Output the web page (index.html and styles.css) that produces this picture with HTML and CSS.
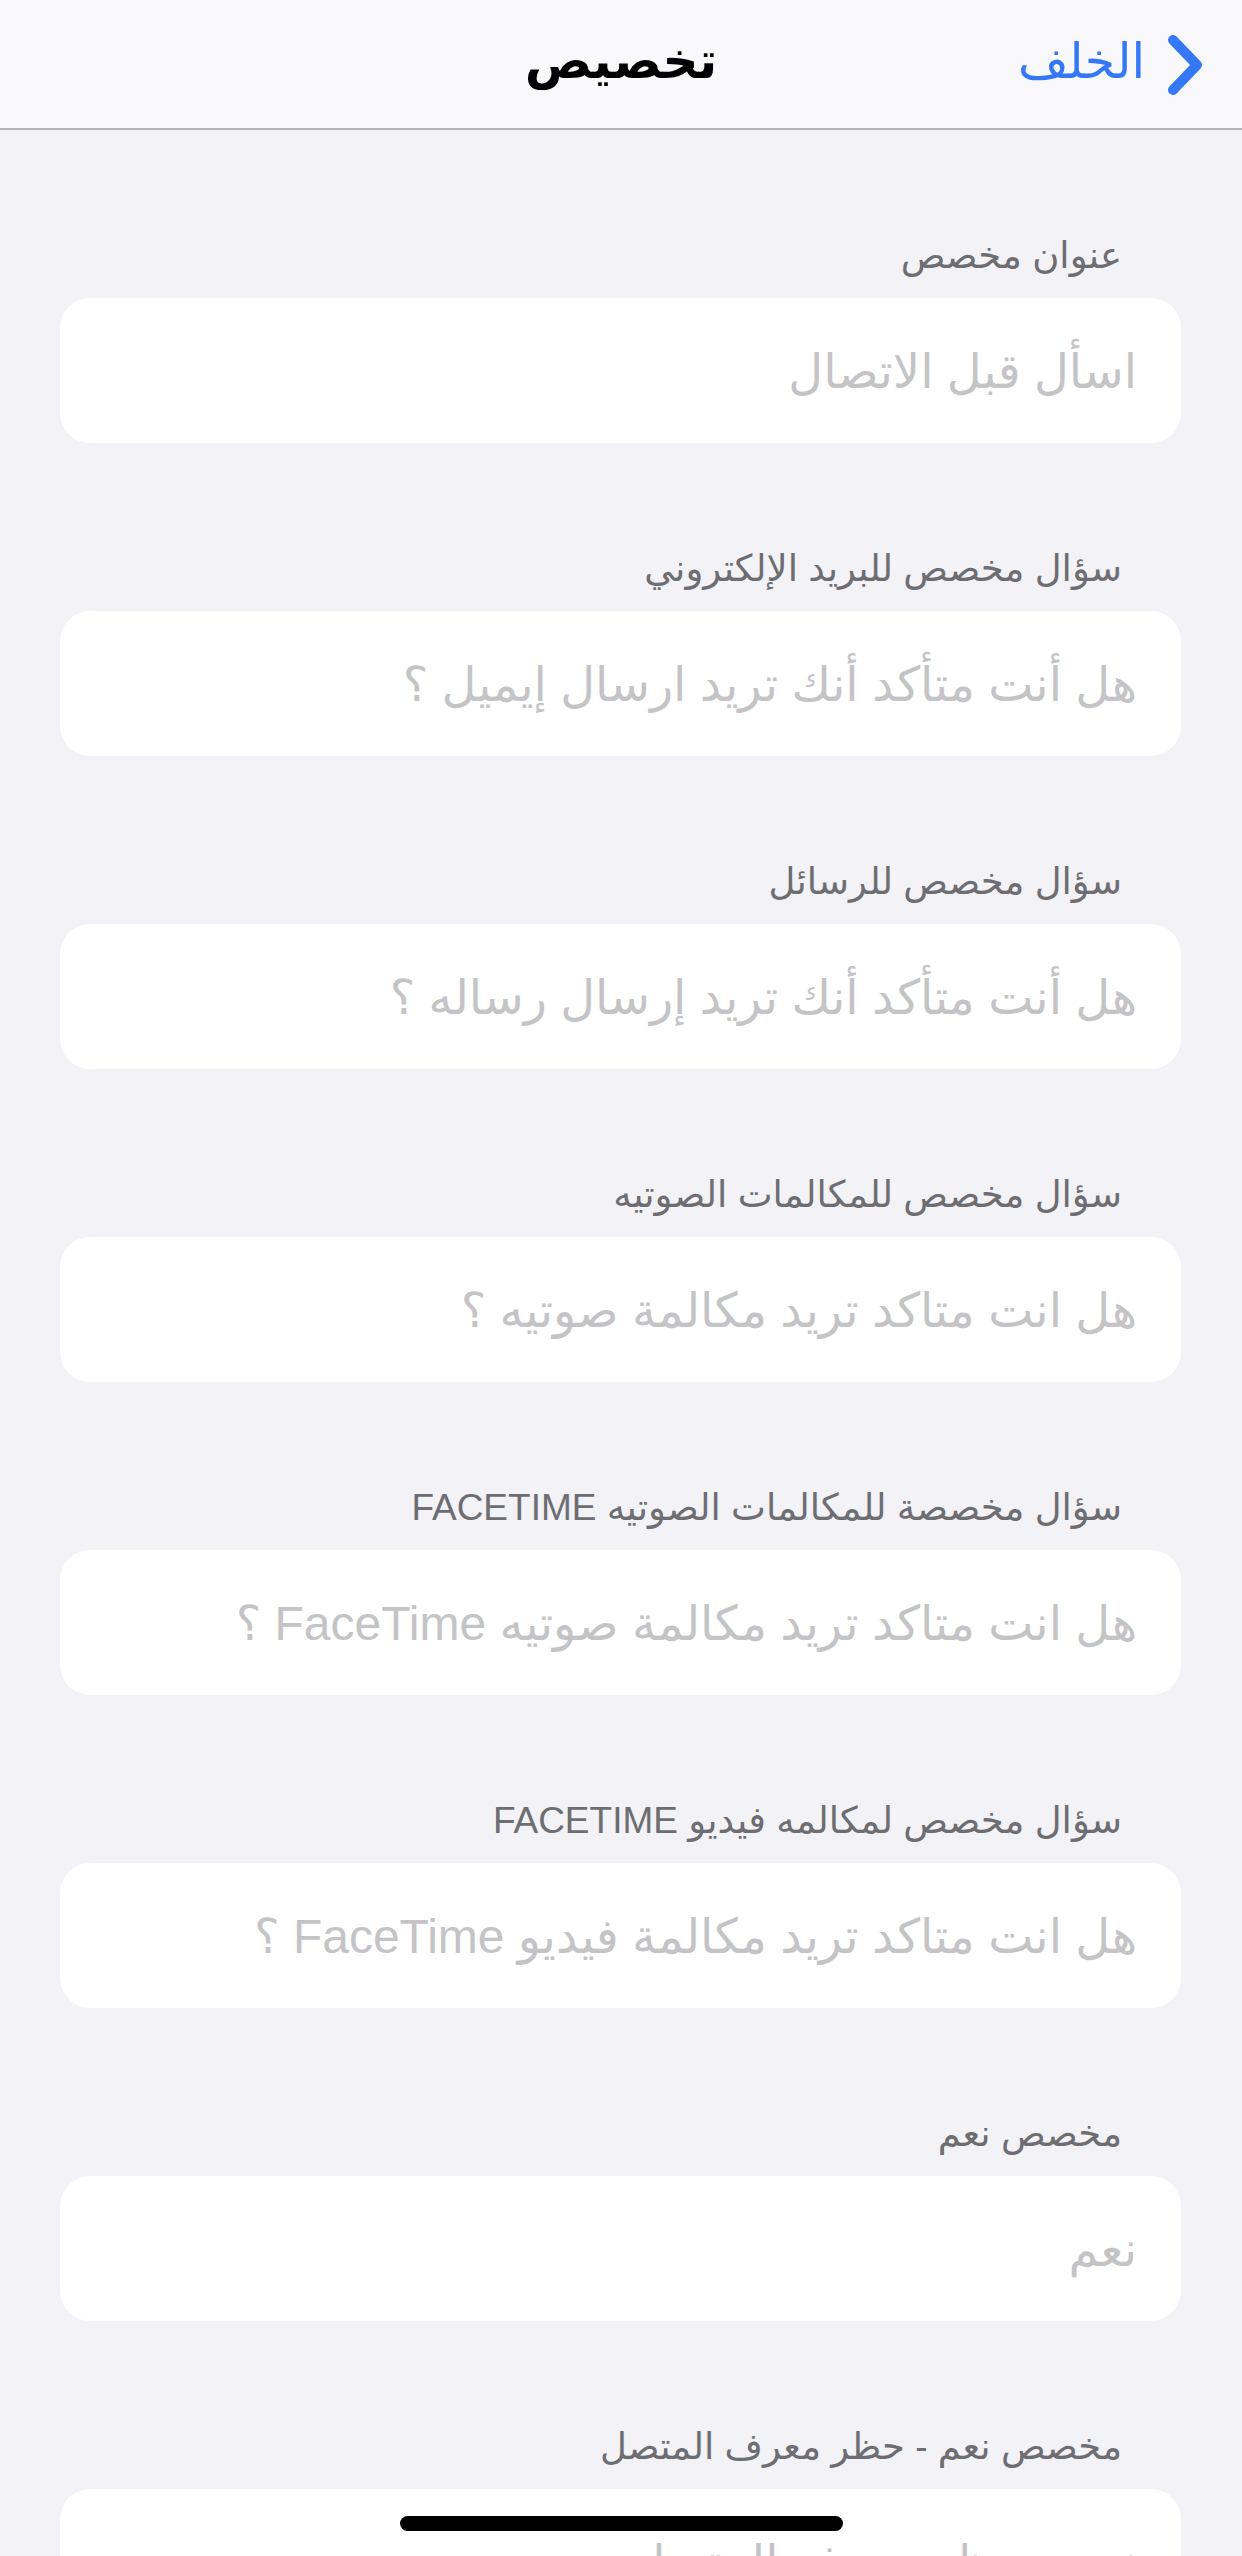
FILE: index.html
```html
<!DOCTYPE html>
<html lang="ar" dir="rtl">
<head>
<meta charset="utf-8">
<title>تخصيص</title>
<link rel="stylesheet" href="styles.css">
</head>
<body>
<div class="screen">
  <header class="navbar">
    <div class="nav-back">
      <svg class="chevron" viewBox="0 0 36 62" width="36" height="62" aria-hidden="true">
        <path d="M6 6 L30 31 L6 56" fill="none" stroke="#3478f6" stroke-width="10" stroke-linecap="round" stroke-linejoin="round"/>
      </svg>
      <span class="back-text">الخلف</span>
    </div>
    <div class="nav-title">تخصيص</div>
    <div class="nav-spacer"></div>
  </header>

  <main class="form">
    <section class="group">
      <div class="label">عنوان مخصص</div>
      <div class="field"><span class="ph">اسأل قبل الاتصال</span></div>
    </section>
    <section class="group">
      <div class="label">سؤال مخصص للبريد الإلكتروني</div>
      <div class="field"><span class="ph">هل أنت متأكد أنك تريد ارسال إيميل ؟</span></div>
    </section>
    <section class="group">
      <div class="label">سؤال مخصص للرسائل</div>
      <div class="field"><span class="ph">هل أنت متأكد أنك تريد إرسال رساله ؟</span></div>
    </section>
    <section class="group">
      <div class="label">سؤال مخصص للمكالمات الصوتيه</div>
      <div class="field"><span class="ph">هل انت متاكد تريد مكالمة صوتيه ؟</span></div>
    </section>
    <section class="group">
      <div class="label">سؤال مخصصة للمكالمات الصوتيه FACETIME</div>
      <div class="field"><span class="ph">هل انت متاكد تريد مكالمة صوتيه FaceTime ؟</span></div>
    </section>
    <section class="group">
      <div class="label">سؤال مخصص لمكالمه فيديو FACETIME</div>
      <div class="field"><span class="ph">هل انت متاكد تريد مكالمة فيديو FaceTime ؟</span></div>
    </section>
    <section class="group">
      <div class="label">مخصص نعم</div>
      <div class="field"><span class="ph">نعم</span></div>
    </section>
    <section class="group">
      <div class="label">مخصص نعم - حظر معرف المتصل</div>
      <div class="field"><span class="ph">نعم - حظر معرف المتصل</span></div>
    </section>
  </main>

  <div class="home-indicator"></div>
</div>
</body>
</html>
```

FILE: styles.css
```css
* {
  box-sizing: border-box;
}

html, body {
  margin: 0;
  padding: 0;
}

body {
  background: #f2f2f7;
  font-family: "Liberation Sans", "DejaVu Sans", sans-serif;
}

.screen {
  position: relative;
  width: 1242px;
  height: 2556px;
  overflow: hidden;
  background: #f2f2f7;
}

.navbar {
  height: 130px;
  background: #f9f9fb;
  border-bottom: 2px solid #b4b4b8;
  display: grid;
  grid-template-columns: 1fr auto 1fr;
  align-items: center;
  padding: 0 39px;
}

.nav-back {
  display: flex;
  align-items: center;
  gap: 22px;
  color: #3478f6;
  font-size: 49px;
  justify-self: start;
}

.chevron {
  display: block;
  margin-top: 2px;
}

.back-text {
  line-height: 1;
  padding-bottom: 6px;
}

.nav-title {
  font-size: 50px;
  font-weight: bold;
  color: #000;
  line-height: 1;
  padding-bottom: 6px;
}

.form {
  padding: 100px 61px 0 60px;
}

.group {
  margin-bottom: 100px;
}

.label {
  height: 52px;
  line-height: 52px;
  font-size: 37px;
  color: #6d6d72;
  padding-right: 59px;
  margin-bottom: 16px;
  white-space: nowrap;
}

.field {
  height: 145px;
  background: #ffffff;
  border-radius: 30px;
  display: flex;
  align-items: center;
  padding: 0 44px 0 44px;
}

.ph {
  font-size: 48px;
  color: #c4c4c7;
  white-space: nowrap;
}

.home-indicator {
  position: absolute;
  left: 400px;
  bottom: 25px;
  width: 443px;
  height: 15px;
  border-radius: 8px;
  background: #000;
}
```
